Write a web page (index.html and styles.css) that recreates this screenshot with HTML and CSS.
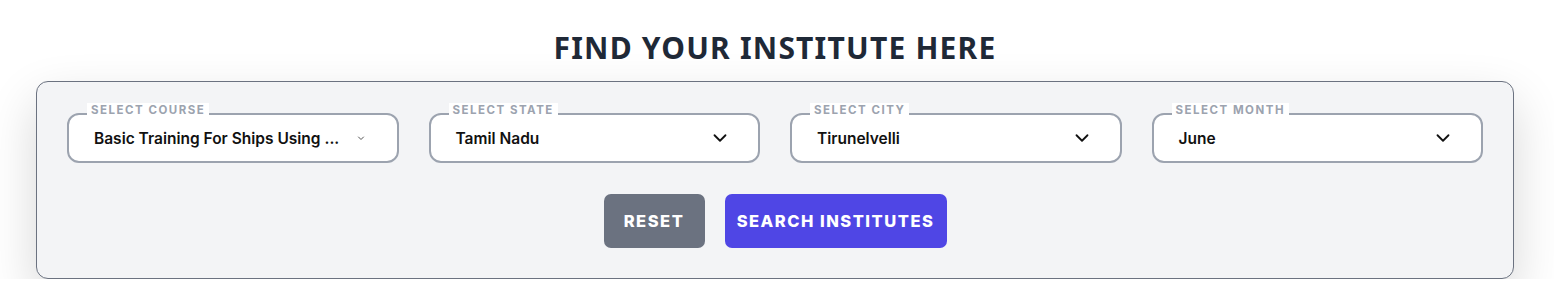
FILE: index.html
```html
<!DOCTYPE html>
<html lang="en">
<head>
    <meta charset="UTF-8">
    <meta name="viewport" content="width=device-width, initial-scale=1.0">
    <title>Find Your Institute</title>
    <link rel="stylesheet" href="styles.css">
</head>
<body>
    <section class="finder">
        <h2 class="finder-title">FIND YOUR INSTITUTE HERE</h2>
        <div class="finder-card">
            <div class="fields">
                <div class="field">
                    <span class="field-label">SELECT COURSE</span>
                    <div class="select">
                        <span class="select-value">Basic Training For Ships Using ...</span>
                        <svg class="chev small" viewBox="0 0 24 24"><path d="M7 10l5 5 5-5"/></svg>
                    </div>
                </div>
                <div class="field">
                    <span class="field-label">SELECT STATE</span>
                    <div class="select">
                        <span class="select-value">Tamil Nadu</span>
                        <svg class="chev" viewBox="0 0 24 24"><path d="M6 9l6 6 6-6"/></svg>
                    </div>
                </div>
                <div class="field">
                    <span class="field-label">SELECT CITY</span>
                    <div class="select">
                        <span class="select-value">Tirunelvelli</span>
                        <svg class="chev" viewBox="0 0 24 24"><path d="M6 9l6 6 6-6"/></svg>
                    </div>
                </div>
                <div class="field">
                    <span class="field-label">SELECT MONTH</span>
                    <div class="select">
                        <span class="select-value">June</span>
                        <svg class="chev" viewBox="0 0 24 24"><path d="M6 9l6 6 6-6"/></svg>
                    </div>
                </div>
            </div>
            <div class="actions">
                <button class="btn reset">RESET</button>
                <button class="btn search">SEARCH INSTITUTES</button>
            </div>
        </div>
    </section>
</body>
</html>
```

FILE: styles.css
```css
body {
    margin: 0;
    background: #ffffff;
    font-family: Inter, "Noto Sans", sans-serif;
}

.finder {
    padding: 30px 40px 0 36px;
}

.finder-title {
    margin: 0 0 15px 0;
    text-align: center;
    font-family: "Noto Sans", sans-serif;
    font-weight: 700;
    font-size: 30px;
    line-height: 36px;
    color: #1f2937;
    letter-spacing: 1.2px;
}

.finder-card {
    background: #f3f4f6;
    border: 1px solid #6b7280;
    border-radius: 12px;
    padding: 31px 30px 30px 30px;
    box-shadow: 0 20px 50px rgba(0, 0, 0, 0.16);
}

.fields {
    display: grid;
    grid-template-columns: repeat(4, 1fr);
    gap: 30px;
}

.field {
    position: relative;
}

.field-label {
    position: absolute;
    left: 20px;
    top: -10px;
    padding: 0 4px;
    background: #ffffff;
    font-size: 11.5px;
    line-height: 14px;
    font-weight: 700;
    letter-spacing: 1.5px;
    color: #9ca3af;
}

.select {
    height: 46px;
    background: #ffffff;
    border: 2px solid #9ca3af;
    border-radius: 12px;
    display: flex;
    align-items: center;
    justify-content: space-between;
    padding: 0 27px 0 25px;
}

.select-value {
    font-size: 15.5px;
    font-weight: 600;
    color: #111111;
    white-space: nowrap;
}

.chev {
    width: 22px;
    height: 22px;
    fill: none;
    stroke: #111111;
    stroke-width: 2;
    stroke-linecap: round;
    stroke-linejoin: round;
}

.chev.small {
    width: 12px;
    height: 12px;
    stroke: #555555;
    stroke-width: 2;
    margin-right: 3px;
}

.actions {
    display: flex;
    justify-content: center;
    gap: 20px;
    margin-top: 31px;
}

.btn {
    height: 54px;
    border: none;
    border-radius: 7px;
    color: #ffffff;
    font-family: Inter, "Noto Sans", sans-serif;
    font-size: 16.5px;
    font-weight: 800;
    letter-spacing: 1.5px;
    padding: 0;
    cursor: pointer;
}

.reset {
    width: 101px;
    background: #6b7280;
}

.search {
    width: 222px;
    background: #4f46e5;
}
```
